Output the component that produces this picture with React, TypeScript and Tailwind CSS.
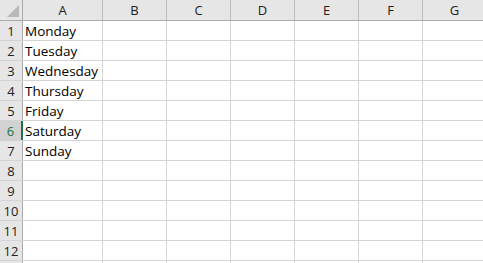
const columns = [
  { name: "A", width: "w-[80px]" },
  { name: "B", width: "w-[64px]" },
  { name: "C", width: "w-[64px]" },
  { name: "D", width: "w-[64px]" },
  { name: "E", width: "w-[64px]" },
  { name: "F", width: "w-[64px]" },
  { name: "G", width: "w-[64px]" },
];

const days = ["Monday", "Tuesday", "Wednesday", "Thursday", "Friday", "Saturday", "Sunday"];

const rows = Array.from({ length: 13 }, (_, i) => i + 1);

export default function App() {
  return (
    <div
      className="w-[483px] h-[263px] overflow-hidden bg-white text-[13.5px] leading-none"
      style={{ fontFamily: '"Open Sans", "Liberation Sans", sans-serif' }}
    >
      {/* column headers */}
      <div className="flex h-[21px] bg-[#e6e6e6] border-b border-[#ababab]">
        <div className="relative w-[23px] shrink-0 border-r border-[#ababab]">
          <svg className="absolute right-[3px] bottom-[3px]" width="12" height="12" viewBox="0 0 12 12">
            <polygon points="12,0 12,12 0,12" fill="#b9b9b9" />
          </svg>
        </div>
        {columns.map((c) => (
          <div
            key={c.name}
            className={`${c.width} shrink-0 flex items-center justify-center pt-[1px] border-r border-[#bcbcbc] text-[#222] text-[13px]`}
          >
            {c.name}
          </div>
        ))}
      </div>

      {/* rows */}
      {rows.map((r) => {
        const selected = r === 6;
        return (
          <div key={r} className="flex h-[20px] border-b border-[#d4d4d4]">
            <div
              className={
                selected
                  ? "w-[23px] shrink-0 flex items-center justify-center pt-[2px] bg-[#d2d2d2] border-r-2 border-[#217346] text-[#217346] text-[13px]"
                  : "w-[23px] shrink-0 flex items-center justify-center pt-[2px] bg-[#e6e6e6] border-r border-[#ababab] text-[#222] text-[13px]"
              }
            >
              {r < 13 ? r : ""}
            </div>
            {columns.map((c, ci) => (
              <div
                key={c.name}
                className={`${c.width} shrink-0 flex items-center pl-[2px] pt-[2px] border-r border-[#d4d4d4] text-black whitespace-nowrap`}
              >
                {ci === 0 ? days[r - 1] ?? "" : ""}
              </div>
            ))}
          </div>
        );
      })}
    </div>
  );
}
